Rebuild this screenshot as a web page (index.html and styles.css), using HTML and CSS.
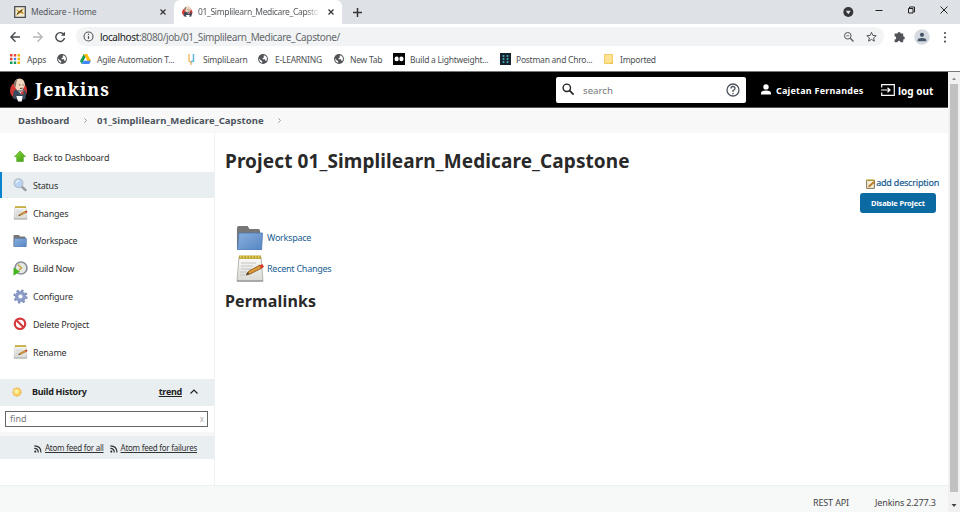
FILE: index.html
```html
<!DOCTYPE html>
<html lang="en">
<head>
<meta charset="utf-8">
<title>01_Simplilearn_Medicare_Capstone [Jenkins]</title>
<link rel="stylesheet" href="styles.css">
</head>
<body>
<svg class="defs" width="0" height="0">
  <defs>
    <linearGradient id="blue" x1="0" y1="0" x2="1" y2="1"><stop offset="0" stop-color="#89b0df"/><stop offset="1" stop-color="#5585c2"/></linearGradient>
    <linearGradient id="paper" x1="0" y1="0" x2="0" y2="1"><stop offset="0" stop-color="#fbfbfa"/><stop offset="1" stop-color="#d9d9d6"/></linearGradient>
    <linearGradient id="green" x1="0" y1="0" x2="1" y2="1"><stop offset="0" stop-color="#8bdc3c"/><stop offset="1" stop-color="#3a9a10"/></linearGradient>
  </defs>
  <symbol id="globe" viewBox="0 0 24 24"><circle cx="12" cy="12" r="11.800" fill="#505357"/><path d="M2.500 11l5.500 5h2v5.500Q3 20 2.500 11zM14 2.700q7.500 1.600 7.500 9l-1.500 5-3-1v-3h-6v-3h2.500V6H14z" fill="#fff"/></symbol>
  <symbol id="folder" viewBox="0 0 28 24"><path d="M1 2q0-2 2-2h9l2 3h9q2 0 2 2v17H1z" fill="#777"/><path d="M3 7h24.500l-1 17H1.500z" fill="url(#blue)" stroke="#4c78ae" stroke-width=".8"/></symbol>
  <symbol id="notepad" viewBox="0 0 28 28"><path d="M3 2h22l2 24H1z" fill="url(#paper)" stroke="#b4b4b0"/><path d="M1 26h26" stroke="#a5a5a5" stroke-width="1.800"/><path d="M3 .5h22v3.500H3z" fill="#b9a33b"/><path d="M4 2.300h20" stroke="#dfc94f" stroke-width="2.500" stroke-dasharray="1.500 1.500"/><path d="M5 8h15M5 11h12M5 14h10M4 17h7M4 20h5" stroke="#c4c4c2"/><path d="M10 20l3-4 11-6 2 3-12 6z" fill="#dc9a37" stroke="#815217" stroke-width=".8"/><path d="M10 20l3-1-1-2z" fill="#333"/><path d="M23.500 10.500l3-1.500 1.500 3-3 1.500z" fill="#d9372a"/></symbol>
  <symbol id="rss" viewBox="0 0 8 8"><circle cx="1.300" cy="6.600" r="1.100" fill="#333"/><path d="M.3 3.400q4 0 4 4.200M.3.900q6.700 0 6.700 6.700" fill="none" stroke="#333" stroke-width="1.200"/></symbol>
  <symbol id="butler" viewBox="0 0 20 26"><circle cx="9.500" cy="13.500" r="9.500" fill="#d33833"/><path d="M3 22l1-8 5-3 6 1 3 4-1 7-7 1z" fill="#394b5c"/><path d="M5 9Q4 .5 11 .5q6 1 5.500 8l-3 5H8z" fill="#efd5bd"/><path d="M4.500 8Q4 2 8 1.500L7 5 6.500 10z" fill="#847467"/><path d="M9 14l3 1 3-2-2 5z" fill="#fff"/><path d="M12 15l3-1v4l-3-1z" fill="#d33833"/><path d="M7 19.500h7l-1 6H9z" fill="#fff"/><path d="M10 7.500h1.500M14 7.500h1.200M11 11.500l3-.5" stroke="#453a35"/></symbol>
</svg>

<div class="browser">
  <div class="tabs">
    <div class="tab idle">
      <svg width="12" height="12" viewBox="0 0 12 12"><path d="M.7.700h10.600v10.600H.7z" fill="#f4ecd2" stroke="#4a4d52" stroke-width="1.300"/><path d="M2 3l3 2 5-3-2 3 2 3-4-1-4 3 2-4z" fill="#bd8623"/><path d="M3 8l5-4" stroke="#3c3522"/></svg>
      <span class="tab-name t-home">Medicare - Home</span>
      <svg class="close" width="6" height="6" viewBox="0 0 6 6"><path d="M.5.500l5 5m0-5l-5 5"/></svg>
    </div>
    <div class="tab active">
      <svg width="11" height="12" viewBox="0 0 20 26" preserveAspectRatio="none"><use href="#butler"/></svg>
      <span class="tab-name t-job">01_Simplilearn_Medicare_Capsto</span>
      <svg class="close" width="6" height="6" viewBox="0 0 6 6"><path d="M.5.500l5 5m0-5l-5 5"/></svg>
    </div>
    <svg class="plus" width="9" height="9" viewBox="0 0 9 9"><path d="M4.500 0v9M0 4.500h9"/></svg>
    <svg class="winctl" width="110" height="24" viewBox="0 0 110 24"><circle cx="8.300" cy="12" r="5" fill="#35363a"/><path d="M5.800 10.700h5l-2.500 3.600z" fill="#dee1e6"/><g fill="none" stroke="#222"><path d="M35.500 10.500h7M68.500 8.500h4.500v4.500h-4.500zM69.500 8V7H74.500v5H73.500M100.500 6.500l7 7m0-7l-7 7"/></g></svg>
  </div>
  <div class="toolbar">
    <svg class="nav" width="60" height="12" viewBox="0 0 60 12" fill="none" stroke-width="1.400"><path d="M10 6H1M5.500 1.300L.9 6l4.600 4.700" stroke="#46494d"/><path d="M23 6h9M27.500 1.300L32.100 6l-4.600 4.700" stroke="#b5b7ba"/><path d="M53.800 3.500A4.400 4.400 0 1 0 54.500 7" stroke="#46494d"/><path d="M55 .8v4h-4z" fill="#46494d" stroke="none"/></svg>
    <div class="omnibox">
      <svg width="11" height="11" viewBox="0 0 11 11"><circle cx="5.500" cy="5.500" r="4.500" fill="none" stroke="#55585c" stroke-width="1.100"/><path d="M5.500 5v3M5.500 2.800v1.200" stroke="#55585c" stroke-width="1.200"/></svg>
      <span class="url"><b>localhost</b>:8080/job/01_Simplilearn_Medicare_Capstone/</span>
      <svg class="omni-icons" width="34" height="12" viewBox="0 0 34 12" fill="none" stroke="#55585c"><circle cx="4.800" cy="4.800" r="3.300"/><path d="M7.300 7.300L10.500 10.500" stroke-width="1.300"/><path d="M3.300 4.800h3" stroke-width=".8"/><path d="M28.500 1.300l1.300 3.100 3.400.3-2.600 2.200.8 3.300-2.900-1.800-2.900 1.800.8-3.300-2.600-2.200 3.400-.3z"/></svg>
    </div>
    <svg class="ext" width="64" height="16" viewBox="0 0 64 16"><path d="M3 4.500h2.500a1.600 1.600 0 0 1 3.200 0h2.500v2.800a1.600 1.600 0 0 1 0 3.200v2.800H8.500a1.500 1.500 0 0 0-3 0H2.600v-2.800a1.600 1.600 0 0 0 0-3.200V4.500z" fill="#505357"/><circle cx="30" cy="8" r="7.700" fill="#d5dae0"/><circle cx="30" cy="5.800" r="2.100" fill="#46566a"/><path d="M25.700 12.200v-1q0-2.200 4.300-2.200t4.300 2.200v1z" fill="#46566a"/><g fill="#505357"><circle cx="53" cy="4" r="1.100"/><circle cx="53" cy="8.300" r="1.100"/><circle cx="53" cy="12.600" r="1.100"/></g></svg>
  </div>
  <div class="bookmarks">
    <span class="bm b1"><svg width="10" height="10" viewBox="0 0 10 10"><path d="M0 1.300h2.500M0 5h2.500" stroke="#e64335" stroke-width="2.400"/><path d="M3.800 1.300h2.400" stroke="#e64335" stroke-width="2.400"/><path d="M7.500 1.300H10M7.500 5H10M7.500 8.700H10" stroke="#f4b400" stroke-width="2.400"/><path d="M3.800 5h2.400" stroke="#4285f4" stroke-width="2.400"/><path d="M0 8.700h2.500M3.800 8.700h2.400" stroke="#159b59" stroke-width="2.400"/></svg><i>Apps</i></span>
    <span class="bm b2"><svg width="10" height="10"><use href="#globe"/></svg></span>
    <span class="bm b3"><svg width="11" height="10" viewBox="0 0 11 10"><path d="M3.800 0L0 7l1.800 3 3.800-7z" fill="#159b59"/><path d="M3.800 0h3.400L11 7H7.500z" fill="#fbbc05"/><path d="M1.800 10l1.900-3.200H11L9.200 10z" fill="#4285f4"/></svg><i>Agile Automation T...</i></span>
    <span class="bm b4"><svg width="7" height="11" viewBox="0 0 7 11" fill="none"><path d="M1 0v6q0 2 2 2v3" stroke="#f5b45b" stroke-width="1.300"/><path d="M5.500 0v7q-2 0-2 1.500" stroke="#58b8de" stroke-width="1.500"/></svg><i>SimpliLearn</i></span>
    <span class="bm b5"><svg width="10" height="10"><use href="#globe"/></svg><i>E-LEARNING</i></span>
    <span class="bm b6"><svg width="10" height="10"><use href="#globe"/></svg><i>New Tab</i></span>
    <span class="bm b7"><svg width="12" height="12" viewBox="0 0 12 12"><path d="M0 0h12v12H0z" fill="#050505"/><circle cx="3.800" cy="5.900" r="2.300" fill="#fff"/><circle cx="8.300" cy="5.900" r="2.300" fill="#fff"/><path d="M6 3v6" stroke="#050505" stroke-width=".8"/></svg><i>Build a Lightweight...</i></span>
    <span class="bm b8"><svg width="11" height="12" viewBox="0 0 11 12"><path d="M0 0h11v12H0z" fill="#17222c"/><path d="M3.500 2v8M7.500 2v8" stroke="#43a4b5" stroke-width="1.700" stroke-dasharray="2 1"/></svg><i>Postman and Chro...</i></span>
    <span class="bm b9"><svg width="9" height="10" viewBox="0 0 9 10"><path d="M.5.500h8v9h-8z" fill="#fde293" stroke="#f3cd62"/><path d="M6 9.500l2.500-2v2z" fill="#e6b93c"/></svg><i>Imported</i></span>
  </div>
</div>

<div class="viewport">
  <div class="page">
    <header class="header">
      <svg width="18" height="24" viewBox="0 0 20 26" preserveAspectRatio="none"><use href="#butler"/></svg>
      <span class="brand">Jenkins</span>
      <div class="search">
        <svg width="13" height="13" viewBox="0 0 13 13" fill="none" stroke="#222"><circle cx="4.800" cy="4.800" r="3.700" stroke-width="1.400"/><path d="M7.600 7.600l4 4" stroke-width="1.700"/></svg>
        <span>search</span>
        <svg width="14" height="14" viewBox="0 0 14 14" fill="none" stroke="#4d545d"><circle cx="7" cy="7" r="6" stroke-width="1.300"/><path d="M5 5.500q0-2 2-2t2 1.900Q9 6.500 7 7.500V9M7 10v1.200" stroke-width="1.300"/></svg>
      </div>
      <div class="user"><svg width="10" height="11" viewBox="0 0 10 11" fill="#fff"><circle cx="5" cy="2.900" r="2.700"/><path d="M0 10.500V9q0-2.500 5-2.500T10 9v1.500z"/></svg><span>Cajetan Fernandes</span></div>
      <div class="logout"><svg width="14" height="12" viewBox="0 0 14 12" fill="none" stroke="#fff" stroke-width="1.200"><path d="M.7 3.500V.7h12.600v10.600H.7V8.500M0 6h8.500M6.500 3.700L9 6 6.500 8.300"/></svg><span>log out</span></div>
    </header>
    <nav class="crumbs">
      <span class="c-dash">Dashboard</span>
      <svg width="3" height="5" viewBox="0 0 3 5"><path d="M.4.300L2.500 2.500.4 4.700"/></svg>
      <span class="c-job">01_Simplilearn_Medicare_Capstone</span>
      <svg width="3" height="5" viewBox="0 0 3 5"><path d="M.4.300L2.500 2.500.4 4.700"/></svg>
    </nav>
    <div class="body">
      <aside class="side">
        <ul class="tasks">
          <li><svg width="14" height="14" viewBox="0 0 14 14"><path d="M7 1l5.500 5.700H10.300V11.500H3.700V6.700H1.500z" fill="url(#green)" stroke="#55a828" stroke-width=".7"/></svg><span>Back to Dashboard</span></li>
          <li class="current"><svg width="14" height="14" viewBox="0 0 14 14"><path d="M9 9l3.500 3" stroke="#9a9da2" stroke-width="2.400" stroke-linecap="round"/><circle cx="5.500" cy="5.300" r="4.400" fill="#b9d5f3" stroke="#b4bcc8" stroke-width="1.200"/><path d="M3 5q.5-2.500 3-2.500" fill="none" stroke="#fff"/></svg><span>Status</span></li>
          <li><svg width="15" height="14"><use href="#notepad"/></svg><span>Changes</span></li>
          <li><svg width="14" height="12"><use href="#folder"/></svg><span>Workspace</span></li>
          <li><svg width="15" height="15" viewBox="0 0 15 15"><circle cx="8" cy="7" r="6" fill="#e4e7e2" stroke="#8c919b" stroke-width="1.700"/><path d="M5 3.500L8.500 7 6 9" fill="none" stroke="#c6a13f" stroke-width="1.400"/><path d="M.5 6.500l6.500 4-6.500 4.200z" fill="#44b51e"/></svg><span>Build Now</span></li>
          <li><svg width="15" height="15" viewBox="0 0 15 15"><circle cx="7.500" cy="7.500" r="5.800" fill="none" stroke="#7f8fba" stroke-width="2.600" stroke-dasharray="2.250 2.300"/><circle cx="7.500" cy="7.500" r="3.800" fill="none" stroke="#8b9bc5" stroke-width="3.400"/></svg><span>Configure</span></li>
          <li><svg width="14" height="14" viewBox="0 0 14 14"><circle cx="7" cy="6.800" r="5.200" fill="#fff" stroke="#d4383b" stroke-width="2.200"/><path d="M3.500 3.300l7 7" stroke="#d4383b" stroke-width="2.200"/></svg><span>Delete Project</span></li>
          <li><svg width="15" height="14"><use href="#notepad"/></svg><span>Rename</span></li>
        </ul>
        <div class="history">
          <svg width="10" height="10" viewBox="0 0 10 10"><circle cx="5" cy="5" r="4" fill="#f8d25c" stroke="#f2b756" stroke-width="1.400" stroke-dasharray="1.800 1"/><circle cx="4.500" cy="4.500" r="2.300" fill="#fff0a1"/></svg>
          <strong>Build History</strong><a>trend</a>
          <svg width="8" height="5" viewBox="0 0 8 5"><path d="M.5 4.500L4 1l3.500 3.500" fill="none" stroke="#222" stroke-width="1.200"/></svg>
        </div>
        <div class="find"><span>find</span><em>x</em></div>
        <div class="strip"></div>
        <div class="feeds"><svg width="8" height="8"><use href="#rss"/></svg><a class="f-all">Atom feed for all</a><svg class="rss2" width="8" height="8"><use href="#rss"/></svg><a class="f-fail">Atom feed for failures</a></div>
      </aside>
      <main class="main">
        <h1>Project 01_Simplilearn_Medicare_Capstone</h1>
        <div class="actions">
          <div class="describe"><svg width="10" height="10" viewBox="0 0 10 10"><path d="M.6 1.500h7.800v7.900H.6z" fill="#f3eedb" stroke="#85775a"/><path d="M.5 1.200h8" stroke="#b39a36" stroke-width="1.500"/><path d="M2.500 7.700L8.800 2.500" stroke="#bd7924" stroke-width="1.800"/></svg><span>add description</span></div>
          <div class="disable"><span>Disable Project</span></div>
        </div>
        <div class="links">
          <div class="lnk"><svg width="27" height="24" viewBox="0 0 28 24" preserveAspectRatio="none"><use href="#folder"/></svg><span>Workspace</span></div>
          <div class="lnk"><svg width="28" height="28"><use href="#notepad"/></svg><span>Recent Changes</span></div>
        </div>
        <h2>Permalinks</h2>
      </main>
    </div>
    <footer class="footer"><span class="rest">REST API</span><span class="ver">Jenkins 2.277.3</span></footer>
  </div>
  <div class="scroll">
    <svg width="12" height="12" viewBox="0 0 12 12"><path d="M4 8l2-2.500L8 8z" fill="#8b8b8b"/></svg>
    <div class="thumb"></div>
    <svg width="12" height="20" viewBox="0 0 12 20"><path d="M3.500 12l2.500 3 2.500-3z" fill="#444"/></svg>
  </div>
</div>
</body>
</html>
```
FILE: styles.css
```css
* { box-sizing: border-box; }
body {
  margin: 0;
  width: 960px;
  height: 512px;
  overflow: hidden;
  display: flex;
  flex-direction: column;
  background: #fff;
  color: #333;
  font-family: "Noto Sans", "Open Sans", sans-serif;
  font-size: 9px;
  line-height: 1;
  white-space: nowrap;
}
svg { display: block; flex: none; }
.defs { position: absolute; }
i, em { font-style: normal; }

.browser { height: 72px; border-bottom: 1px solid #777; }
.tabs { height: 24px; background: #dee1e6; display: flex; align-items: center; }
.tab { height: 24px; display: flex; align-items: center; color: #55585c; }
.idle { width: 174px; padding: 0 8px 0 14px; border-radius: 0 0 6px 0; }
.active { width: 168px; padding: 0 8px 0 8px; background: #fff; border-radius: 6px 6px 0 0; }
.tab-name { margin-left: 5px; flex: 1; line-height: 14px; font-size: 8.500px; letter-spacing: -.2px; }
.t-job { margin-right: 8px; letter-spacing: -.33px; -webkit-mask-image: linear-gradient(90deg, #000 88%, transparent); mask-image: linear-gradient(90deg, #000 88%, transparent); }
.close { fill: none; stroke: #333; stroke-width: 1.2; }
.plus { margin-left: 11px; stroke: #333; stroke-width: 1.5; }
.winctl { margin-left: auto; margin-right: 10px; }

.toolbar { height: 25px; display: flex; align-items: center; padding-left: 10px; }
.nav { margin-right: 6px; }
.omnibox { width: 808px; height: 19px; border-radius: 10px; background: #f1f3f4; display: flex; align-items: center; padding: 0 7px; }
.url { margin-left: 6px; font-size: 10px; line-height: 14px; color: #66696d; letter-spacing: -.37px; }
.url b { font-weight: 400; color: #222; }
.omni-icons { margin-left: auto; }
.ext { margin-left: 8px; }

.bookmarks { height: 20px; display: flex; align-items: center; padding-left: 10px; color: #4d5054; font-size: 8.500px; letter-spacing: -.25px; }
.bm { display: flex; align-items: center; gap: 6px; }
.bm i { line-height: 13px; }
.b1 { width: 47px; gap: 7px; }
.b2 { width: 23px; }
.b3 { width: 108px; }
.b4 { width: 70px; gap: 8px; }
.b5 { width: 76px; gap: 7px; }
.b6 { width: 59px; }
.b7 { width: 107px; gap: 5px; }
.b8 { width: 104px; gap: 5px; }
.b9 { gap: 7px; }

.viewport { height: 440px; display: flex; }
.page { width: 948px; display: flex; flex-direction: column; }
.header { height: 36px; background: #000; border-bottom: 1px solid #555; display: flex; align-items: center; padding-left: 10px; color: #fff; font-weight: 700; }
.brand { width: 521px; margin: -2px 0 0 7px; font: 700 18px/24px "Noto Serif", "DejaVu Serif", serif; letter-spacing: 1px; }
.search { width: 190px; height: 26px; border-radius: 2px; background: #fff; display: flex; align-items: center; padding: 0 6px 0 6px; color: #777; font-weight: 400; font-size: 9.700px; }
.search span { margin-left: 8px; flex: 1; line-height: 14px; padding-top: 2px; }
.user { width: 120px; margin-left: 15px; display: flex; align-items: center; gap: 5px; }
.user span, .logout span { line-height: 14px; padding-top: 2px; letter-spacing: .22px; }
.logout { display: flex; align-items: center; gap: 3px; }
.logout span { letter-spacing: 0; font-size: 10px; }

.crumbs { height: 25px; background: #f8f8f8; display: flex; align-items: center; padding-left: 18px; color: #4d545d; font-weight: 700; font-size: 9.500px; }
.crumbs span { line-height: 14px; padding-top: 1px; }
.crumbs svg { fill: none; stroke: #888; stroke-width: .8; }
.c-dash { width: 66px; }
.c-job { width: 181px; margin-left: 10px; letter-spacing: .07px; }

.body { height: 352px; display: flex; }
.side { width: 215px; border-right: 1px solid #edf1f3; }
.tasks { margin: 0; padding: 11.500px 0 0; list-style: none; display: flex; flex-direction: column; gap: 2.150px; height: 246px; }
.tasks li { height: 25.700px; display: grid; grid-template-columns: 17px 1fr; column-gap: 3px; align-items: center; padding-left: 13px; }
.tasks .current { background: #e9eef1; border-left: 2px solid #0b84d0; padding-left: 11px; }
.tasks span { line-height: 14px; padding-top: 1.200px; letter-spacing: -.22px; }
.history { height: 27px; background: #e9eef1; display: flex; align-items: center; padding: 0 16px 2px 12px; color: #222; letter-spacing: -.27px; }
.history strong { margin-left: 10px; flex: 1; line-height: 14px; }
.history a { margin-right: 8px; font-weight: 700; text-decoration: underline; line-height: 14px; }
.find { width: 203px; height: 16px; margin: 5px 0 5px 5px; border: 1px solid #666; display: flex; align-items: center; justify-content: space-between; padding: 0 3px 1px 4px; color: #777; }
.find em { color: #aaa; font-size: 8px; }
.find span { line-height: 13px; }
.strip { height: 4px; background: #f7f7f7; }
.feeds { height: 23px; background: #e9eef1; display: flex; align-items: center; padding-left: 34px; font-size: 8px; letter-spacing: -.25px; }
.feeds a { text-decoration: underline; line-height: 12px; margin-left: 3px; }
.feeds svg { margin-top: 2px; }
.rss2 { margin-left: 6px; }

.main { width: 733px; padding: 14px 9px 0 10px; }
h1 { margin: 0; font-size: 19px; line-height: 28px; color: #292929; letter-spacing: .1px; }
.actions { height: 47px; display: flex; flex-direction: column; align-items: flex-end; padding-top: 1px; color: #1a5e93; }
.describe { display: flex; align-items: center; }
.describe svg { margin-top: 2px; }
.describe span { line-height: 13px; letter-spacing: -.2px; -webkit-text-stroke: .2px #1a5e93; }
.disable { width: 76px; height: 20px; margin: 4px 3px 0 0; padding-top: 1px; background: #0b6aa2; border-radius: 3px; color: #fff; font-weight: 700; font-size: 7.500px; letter-spacing: -.13px; display: flex; align-items: center; justify-content: center; }
.links { padding-left: 11px; color: #1a5e93; }
.lnk { height: 31px; display: grid; grid-template-columns: 28px 1fr; column-gap: 3px; align-items: center; }
.lnk span { line-height: 14px; letter-spacing: -.26px; }
h2 { margin: 6px 0 0; font-size: 16px; line-height: 22px; color: #292929; letter-spacing: .15px; }

.footer { height: 27px; background: #f7f8f8; border-top: 1px solid #edf1f1; padding: 10px 0 0 813px; display: flex; color: #444; letter-spacing: -.15px; }
.footer span { line-height: 14px; }
.rest { width: 62px; }

.scroll { width: 12px; background: #f1f1f1; display: flex; flex-direction: column; align-items: center; }
.thumb { width: 8px; flex: 1; background: #c1c1c1; }
```
